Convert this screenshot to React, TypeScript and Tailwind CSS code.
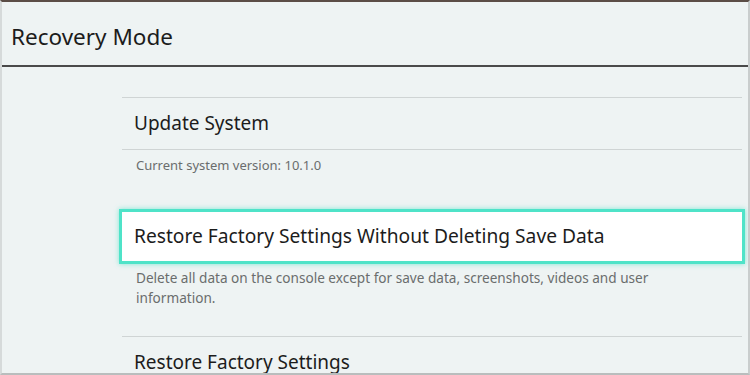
export default function App() {
  return (
    <div
      className="w-[750px] h-[375px] overflow-hidden bg-[#eef3f3] border-t-2 border-t-[#5b4d46] border-l-2 border-l-[#d6dada] border-r-2 border-r-[#c9cdcd] border-b-2 border-b-[#b9bdbd] text-[#1c1c1c]"
      style={{ fontFamily: '"Noto Sans", "Open Sans", sans-serif' }}
    >
      <header className="h-[65px] border-b-2 border-[#4a4a4a] flex items-center pl-[9px] pt-[8px]">
        <h1 className="text-[22.5px] leading-none">Recovery Mode</h1>
      </header>

      <div className="pl-[120px] pr-[6px] pt-[30px]">
        <div className="border-t border-[#cfd4d4]" />
        <div className="h-[51px] flex items-center pl-[12px] text-[19px]">Update System</div>
        <div className="border-t border-[#cfd4d4]" />
        <p className="pl-[14px] pt-[5px] text-[13px] leading-[20px] text-[#6a6d6d]">
          Current system version: 10.1.0
        </p>

        <div className="mt-[34px] -mx-[3px] h-[55px] bg-white border-[3px] border-[#4fe3c8] shadow-[0_0_5px_rgba(79,227,200,0.7)] flex items-center pl-[12px] text-[19.2px]">
          Restore Factory Settings Without Deleting Save Data
        </div>
        <p className="w-[590px] pl-[14px] pt-[4px] text-[13.6px] leading-[20px] text-[#6a6d6d]">
          Delete all data on the console except for save data, screenshots, videos and user information.
        </p>

        <div className="mt-[28px] border-t border-[#cfd4d4]" />
        <div className="h-[51px] flex items-center pl-[12px] text-[19px]">Restore Factory Settings</div>
      </div>
    </div>
  )
}
